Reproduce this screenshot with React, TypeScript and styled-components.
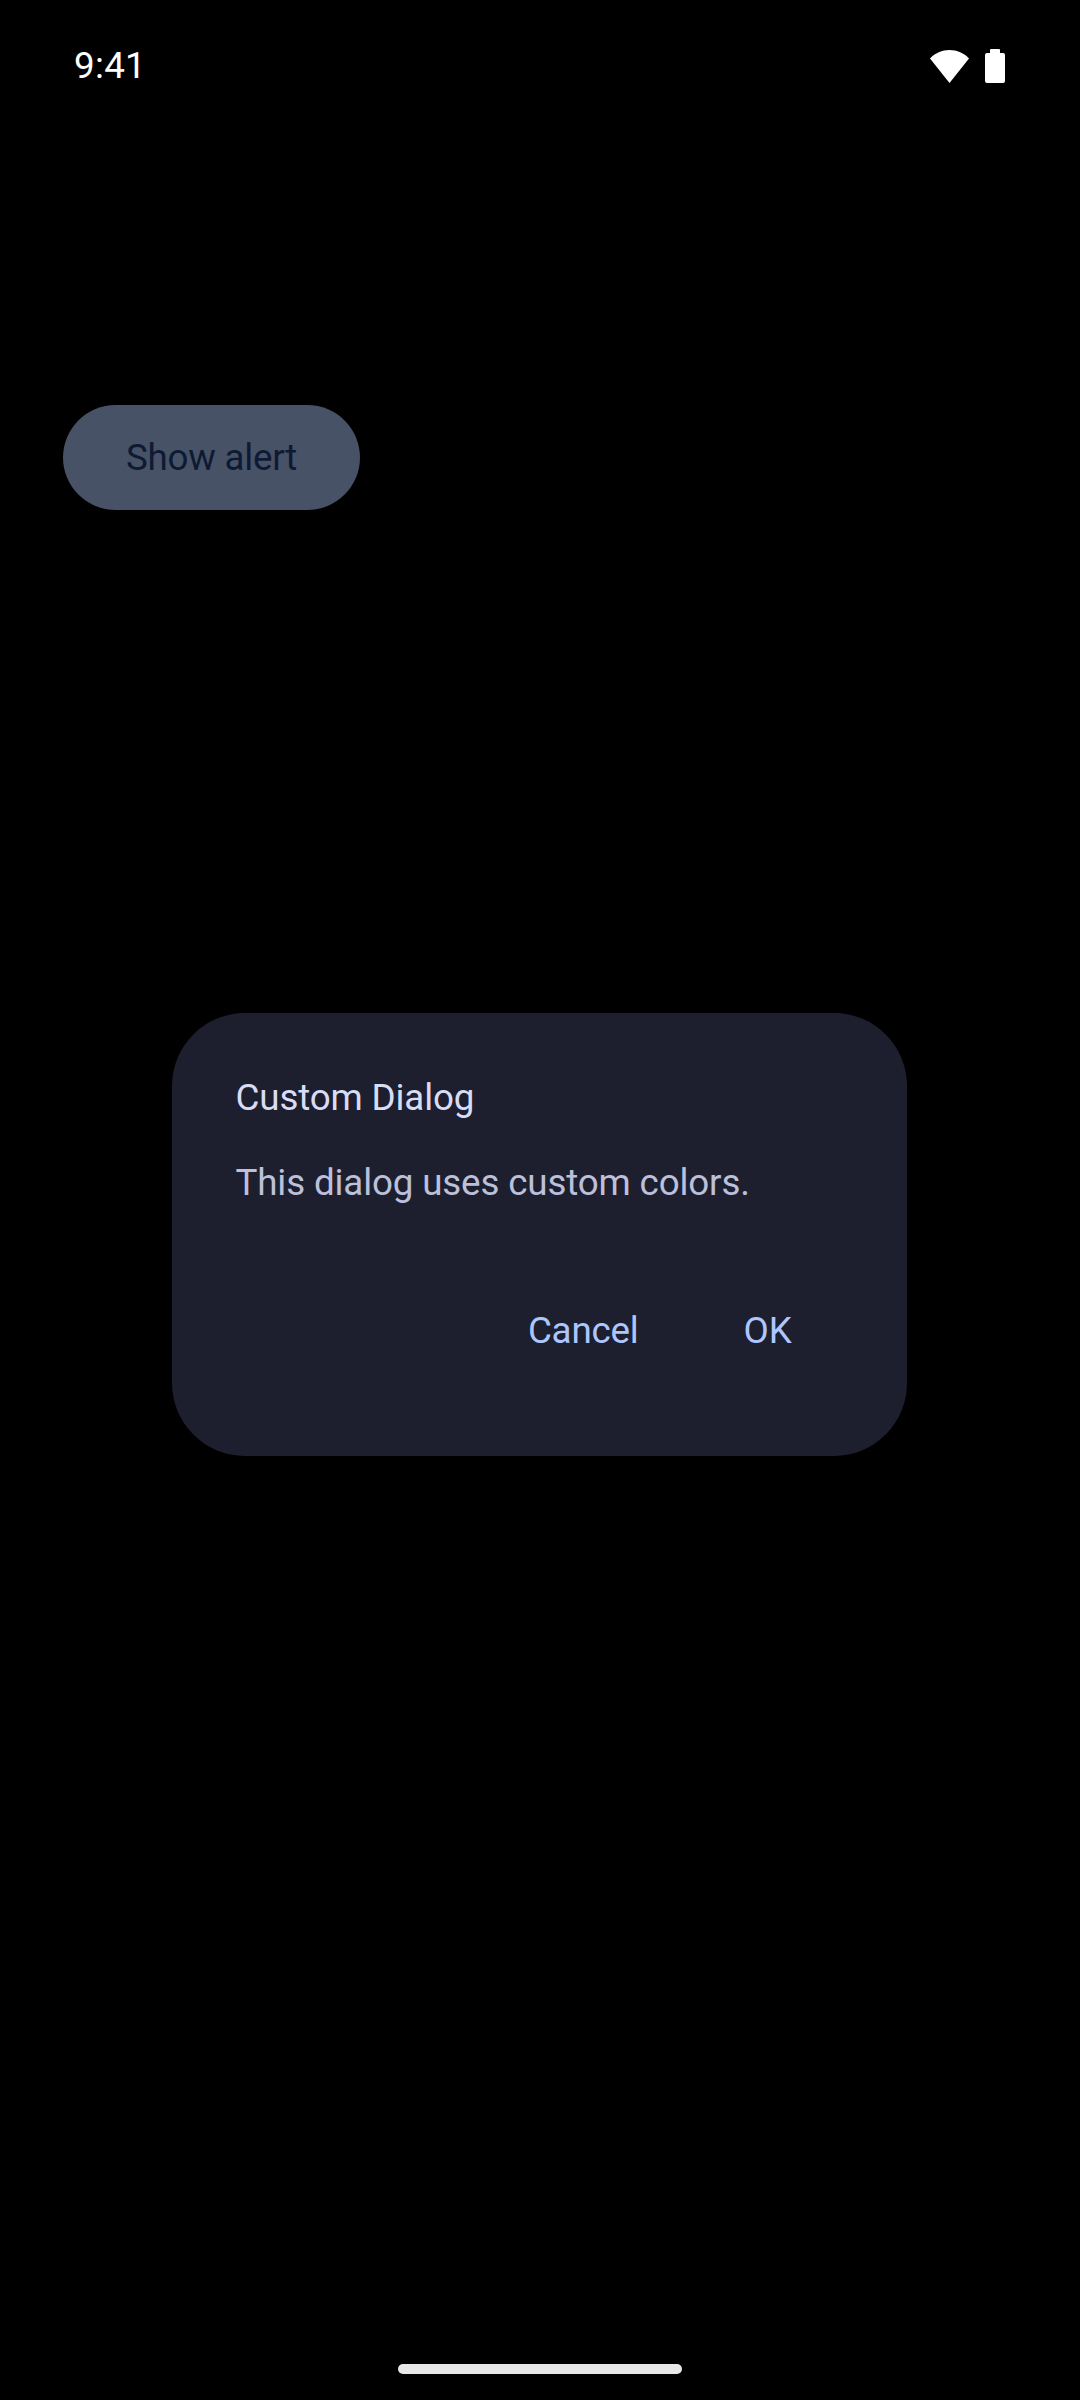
import React from "react";
import styled, { createGlobalStyle } from "styled-components";

const GlobalStyle = createGlobalStyle`
    html,
    body {
        margin: 0;
        padding: 0;
        background: #000;
    }
`;

const Screen = styled.div`
    position: relative;
    width: 1080px;
    height: 2400px;
    display: flex;
    flex-direction: column;
    background: #000;
    font-family: Roboto, "Liberation Sans", sans-serif;
    overflow: hidden;
`;

const StatusBar = styled.div`
    height: 132px;
    padding: 0 75px 0 74px;
    display: flex;
    justify-content: space-between;
    align-items: center;
    box-sizing: border-box;
`;

const Time = styled.span`
    color: #fff;
    font-size: 36.75px;
    line-height: 44px;
    letter-spacing: 0.3px;
`;

const StatusIcons = styled.div`
    display: flex;
    align-items: center;
    gap: 16px;
`;

const Content = styled.div`
    flex: 1;
    padding: 273px 0 0 63px;
`;

const FilledButton = styled.div`
    width: 297px;
    height: 105px;
    border-radius: 52.5px;
    background: #475267;
    color: #0e1a33;
    font-size: 36.75px;
    letter-spacing: -0.25px;
    display: flex;
    align-items: center;
    justify-content: center;
`;

const Overlay = styled.div`
    position: absolute;
    inset: 0;
    padding: 69px 2px 0 0;
    box-sizing: border-box;
    display: flex;
    align-items: center;
    justify-content: center;
`;

const Dialog = styled.div`
    width: 735px;
    height: 443px;
    box-sizing: border-box;
    border-radius: 73px;
    background: #1e1f2e;
    padding: 59px 73px 0 64px;
    display: flex;
    flex-direction: column;
`;

const Title = styled.div`
    color: #d8dcf5;
    font-size: 36.75px;
    line-height: 52px;
    letter-spacing: -0.15px;
`;

const Message = styled.div`
    color: #bcc0da;
    font-size: 36.75px;
    line-height: 52px;
    letter-spacing: -0.15px;
    margin-top: 33px;
`;

const Actions = styled.div`
    display: flex;
    justify-content: flex-end;
    gap: 21px;
    margin-top: 96px;
`;

const TextButton = styled.div`
    color: #adc6ff;
    font-size: 36.75px;
    line-height: 52px;
    letter-spacing: -0.2px;
    padding: 0 42px;
`;

const GestureBar = styled.div`
    width: 284px;
    height: 10px;
    border-radius: 5px;
    background: #e8e8e8;
    margin: 0 auto 26px;
`;

const WifiIcon = () => (
    <svg width="39" height="33" viewBox="0 0 39 33">
        <path d="M0 8.5C5 3 12 0 19.5 0S34 3 39 8.5L19.5 33Z" fill="#fff" />
    </svg>
);

const BatteryIcon = () => (
    <svg width="20" height="34" viewBox="0 0 20 34">
        <path
            d="M6 0h8a1 1 0 0 1 1 1v3h3a2 2 0 0 1 2 2v26a2 2 0 0 1-2 2H2a2 2 0 0 1-2-2V6a2 2 0 0 1 2-2h3V1a1 1 0 0 1 1-1Z"
            fill="#fff"
        />
    </svg>
);

export default function App() {
    return (
        <Screen>
            <GlobalStyle />
            <StatusBar>
                <Time>9:41</Time>
                <StatusIcons>
                    <WifiIcon />
                    <BatteryIcon />
                </StatusIcons>
            </StatusBar>
            <Content>
                <FilledButton>Show alert</FilledButton>
            </Content>
            <GestureBar />
            <Overlay>
                <Dialog>
                    <Title>Custom Dialog</Title>
                    <Message>This dialog uses custom colors.</Message>
                    <Actions>
                        <TextButton>Cancel</TextButton>
                        <TextButton>OK</TextButton>
                    </Actions>
                </Dialog>
            </Overlay>
        </Screen>
    );
}
